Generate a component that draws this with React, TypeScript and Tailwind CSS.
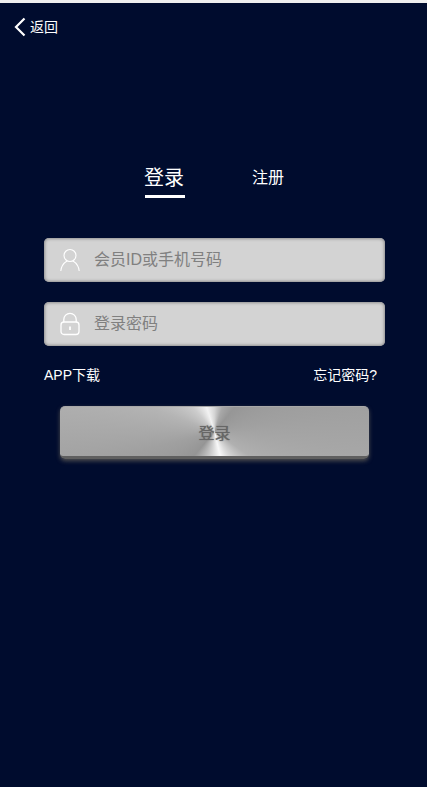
import React from 'react';

const cjk = 'font-["Liberation_Sans","Noto_Sans_CJK_SC",sans-serif]';

function UserIcon() {
  return (
    <svg width="20" height="24" viewBox="0 0 20 24" fill="none" stroke="#ffffff" strokeWidth="1.100">
      <circle cx="10" cy="7.500" r="6" />
      <path d="M.8 23c.4-4.500 3-8 6.200-10M19.200 23c-.4-4.500-3-8-6.200-10" />
    </svg>
  );
}

function LockIcon() {
  return (
    <svg width="20" height="24" viewBox="0 0 20 24" fill="none" stroke="#ffffff" strokeWidth="1.300">
      <path d="M3.800 10V7.500a6.200 6.200 0 0 1 12.400 0V10" />
      <rect x="1" y="10" width="18" height="12.500" rx="3" />
      <path d="M10 14.500v3.500" strokeWidth="1.800" />
    </svg>
  );
}

function Field({ icon, placeholder, indent }: { icon: React.ReactNode; placeholder: string; indent: string }) {
  return (
    <div className="flex h-11 items-center rounded-[5px] bg-[#d3d3d3] shadow-[inset_0_0_3px_1px_#8f8f8f]">
      <div className="ml-4 flex w-5 shrink-0 justify-center">{icon}</div>
      <span className={`${indent} text-base leading-none text-[#808080]`}>{placeholder}</span>
    </div>
  );
}

export default function App() {
  return (
    <div className={`${cjk} flex h-[787px] w-[427px] flex-col overflow-hidden bg-[#000c2e] text-white`}>
      <div className="h-[3px] bg-[#efefef]" />

      <div className="flex h-12 items-center pl-[14px]">
        <svg width="12" height="20" viewBox="0 0 12 20" fill="none" stroke="#fff" strokeWidth="2.200">
          <path d="M10.500 1.500 2 10l8.500 8.500" />
        </svg>
        <span className="ml-1 text-sm">返回</span>
      </div>

      <div className="mt-[112px] flex items-start pl-[144px]">
        <div className="flex w-[41px] flex-col">
          <span className="text-[20px] leading-[30px]">登录</span>
          <div className="ml-px mt-[2px] h-[3px] w-10 bg-white" />
        </div>
        <span className="ml-[67px] mt-[3px] text-base leading-6">注册</span>
      </div>

      <div className="mt-10 flex flex-col gap-5 pl-11 pr-[42px]">
        <Field icon={<UserIcon />} placeholder="会员ID或手机号码" indent="ml-[14px]" />
        <Field icon={<LockIcon />} placeholder="登录密码" indent="ml-[14px]" />
      </div>

      <div className="mt-[19px] flex justify-between pl-11 pr-[50px] text-sm leading-5">
        <span>APP下载</span>
        <span>忘记密码?</span>
      </div>

      <div className="ml-[60px] mt-[21px] flex h-[53px] w-[309px] items-center justify-center rounded-[5px] border-t border-t-[#a8a8a8] border-b-[3px] border-b-[#5f5f5f] bg-[conic-gradient(from_0deg_at_50%_50%,#d4d4d4_0deg,#a8a8a8_18deg,#969696_40deg,#a0a0a0_80deg,#b0b0b0_125deg,#d8d8d8_150deg,#f8f8f8_167deg,#d0d0d0_188deg,#959595_220deg,#a0a0a0_255deg,#b4b4b4_290deg,#cccccc_318deg,#f2f2f2_342deg,#d4d4d4_360deg)] pt-1 text-base text-[#666666] shadow-[0_2px_4px_#4f4f4f] [text-shadow:0_0_1px_#666666]">
        登录
      </div>
    </div>
  );
}
